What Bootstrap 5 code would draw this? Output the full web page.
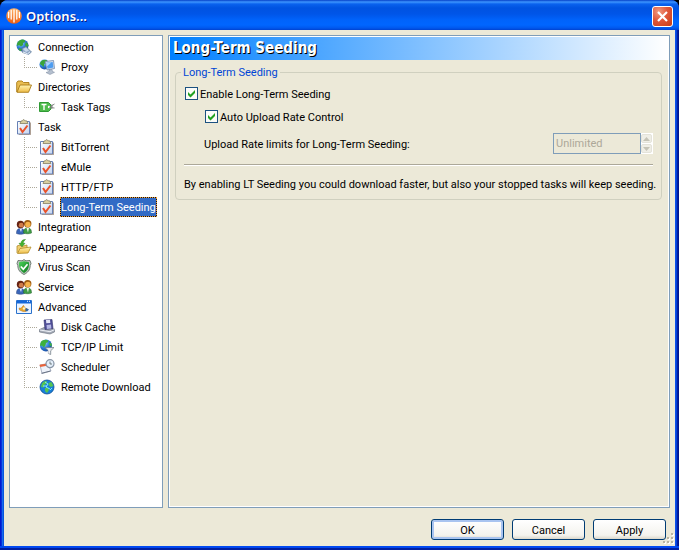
<!DOCTYPE html>
<html lang="en">
<head>
<meta charset="utf-8">
<meta name="viewport" content="width=device-width, initial-scale=1">
<title>Options...</title>
<link rel="stylesheet" href="https://cdn.jsdelivr.net/npm/bootstrap@5.3.0/dist/css/bootstrap.min.css">
<style>
  :root { --face: #ece9d8; --edge: #7f9db9; --dots: #aca899; }
  html, body { background: #000; }
  body { font: 11px/20px Roboto, "Liberation Sans", sans-serif; color: #000; }
  .dialog-window {
    border-radius: 8px 8px 0 0; overflow: hidden;
    background: linear-gradient(90deg, #0019cf 0 1px, #0831d9 1px 2px, #166aee 2px 3px, #0855dd 3px 4px, #0855dd 4px calc(100% - 4px), #0b4fe8 calc(100% - 4px) calc(100% - 3px), #0441d8 calc(100% - 3px) calc(100% - 2px), #001ea0 calc(100% - 2px) calc(100% - 1px), #00138c calc(100% - 1px));
  }
  .title-strip {
    height: 30px; padding: 2px 6px 0;
    background: linear-gradient(#0540c8 0, #3d95ff 2px, #0a62ee 4px, #0053e1 8px, #0055e8 14px, #0063fb 20px, #0066ff 25px, #0058ee 28px, #0042d0 30px);
  }
  .title-text { font: 600 13px/20px "Noto Sans", sans-serif; color: #fff; text-shadow: 1px 1px 0 #0a1883; margin: 0; }
  .close-btn { width: 21px; height: 21px; border: 1px solid #fff; border-radius: 3px; background: radial-gradient(circle at 30% 25%, #f09a80, #e0573a 45%, #c63c14); }
  .face { background: var(--face); margin: 0 4px; padding: 5px 5px 6px; }
  .frame-bottom { height: 4px; background: linear-gradient(#0048f1 0 50%, #001ea0 50%); }
  .pane { border: 1px solid var(--edge); }
  .tree { width: 154px; background: #fff; padding: 1px 0 0 6px; }
  .tree-row { height: 20px; }
  .tree-row a { color: #000; text-decoration: none; line-height: 18px; padding: 2px 1px 0; white-space: nowrap; }
  .tree-row svg { margin-right: 5px; }
  .branch .tree-row { padding-left: 8px; }
  .wire {
    width: 15px; height: 20px; padding: 0;
    background:
      repeating-linear-gradient(var(--dots) 0 1px, transparent 1px 2px) 0 0 / 1px 100% no-repeat,
      repeating-linear-gradient(90deg, var(--dots) 0 1px, transparent 1px 2px) 0 10px / 13px 1px no-repeat;
  }
  .branch li:last-child .wire { background-size: 1px 10px, 13px 1px; }
  .tree-row a.chosen { background: #316ac5; color: #fff; outline: 1px dotted #f0a030; outline-offset: -1px; box-shadow: inset 0 0 0 1px #101020; }
  .page-pane { box-shadow: inset 0 0 0 1px #fff; padding: 1px; margin-left: 5px; min-width: 0; }
  .page-head { font: bold 15px/23px "DejaVu Sans Condensed", sans-serif; color: #fff; text-shadow: 1px 1px 0 #000; background: linear-gradient(90deg, #0080ff, #fff); padding-left: 3px; margin: 0; }
  .group-box { border: 1px solid #d0d0bf; border-radius: 4px; margin: 2px 6px 0 5px; padding: 0 8px 4px; }
  .group-box legend { float: none; width: auto; font-size: 11px; line-height: 18px; color: #0046d5; margin: 0 0 0 -3px; padding: 2px 2px 0; }
  .group-box label { padding-top: 2px; }
  .note { margin: 0 -6px 0 0; }
  .form-check-input.xp-check { width: 13px; height: 13px; margin: 0; border: 1px solid #1c5180; border-radius: 0; background-color: #fbfbf8; }
  .form-check-input.xp-check:checked { background-size: 11px 11px; background-image: url("data:image/svg+xml,%3Csvg xmlns='http://www.w3.org/2000/svg' viewBox='0 0 11 11'%3E%3Cpath d='M2 4v3l2.500 2.500L9 5V2L4.500 6.500z' fill='%2321a121'/%3E%3C/svg%3E"); }
  .opt { height: 23px; gap: 2px; padding-left: 1px; }
  .sub { padding-left: 21px; }
  .rate { height: 31px; padding-left: 20px; }
  .rate-input { width: 88px; height: 21px; border: 1px solid var(--edge); background: var(--face); color: #aca899; padding: 0 2px; font-size: 11px; }
  .spin { width: 12px; height: 21px; background: #fff; padding: 1px 1px 1px 0; gap: 1px; }
  .spin button { border: 1px solid #e4e3da; border-radius: 2px; background: #efeee6; padding: 0; line-height: 0; flex: 1; }
  .rule { height: 2px; background: #aca899; border-bottom: 1px solid #fff; margin: 5px 0 9px; }
  .xp-btn { width: 73px; height: 21px; border: 1px solid #003c74; border-radius: 3px; background: linear-gradient(#fff, #f4f3ee 80%, #dcd8cb); color: #000; font-size: 11px; line-height: 17px; padding: 2px 0 0; }
  .xp-btn.default-btn { box-shadow: inset 0 0 0 2px #a9c4f0; }
  .actions { gap: 8px; padding-top: 11px; padding-right: 4px; }
  .grip { position: absolute; right: 1px; bottom: 2px; }
</style>
<script src="https://cdn.jsdelivr.net/npm/bootstrap@5.3.0/dist/js/bootstrap.bundle.min.js"></script>
</head>
<body>
<svg class="position-absolute" width="0" height="0" aria-hidden="true">
  <defs>
    <radialGradient id="gGlobe" cx=".35" cy=".3" r=".8"><stop offset="0" stop-color="#a8d8ff"/><stop offset=".5" stop-color="#2f7fd6"/><stop offset="1" stop-color="#123f96"/></radialGradient>
    <linearGradient id="gOrange" x2="0" y2="1"><stop offset="0" stop-color="#ffb56b"/><stop offset="1" stop-color="#ee5a0c"/></linearGradient>
    <linearGradient id="gFolder" x2="0" y2="1"><stop offset="0" stop-color="#fff3b0"/><stop offset="1" stop-color="#eebb45"/></linearGradient>
    <linearGradient id="gShield" x2="1" y2="1"><stop offset="0" stop-color="#4fd45c"/><stop offset="1" stop-color="#08751b"/></linearGradient>
    <linearGradient id="gPaper" x2="1" y2="1"><stop offset="0" stop-color="#fff"/><stop offset="1" stop-color="#c4d4f0"/></linearGradient>
  </defs>
  <symbol id="i-connection" viewBox="0 0 16 16">
    <circle cx="6.500" cy="6.500" r="6" fill="url(#gGlobe)"/>
    <path d="M5 .8C8 0 9.500 1 9 3L7 4 7 6 5 7.500 3 6 1 7C.5 4 2 2 5 .8zM10 3l2 2 .5 2-2 1-1.500-2zM3 9l3 1-1 2.300C3 11.500 2 10.500 3 9z" fill="#3aa53a"/>
    <path d="M6 9.500l4-2 3.500 3.500L15.500 13l-3 2.500-6-2z" fill="#8fa8c6" stroke="#5f7897" stroke-width=".6"/>
    <path d="M7 10l3-1.500 3 3-3 1.500z" fill="#c8d8ec"/><path d="M7 13l4.500 1.800 2.500-2" fill="none" stroke="#e6eef8"/>
  </symbol>
  <symbol id="i-proxy" viewBox="0 0 16 16">
    <circle cx="5.500" cy="5.500" r="5" fill="url(#gGlobe)"/><path d="M4 1l4 0-1 3-2 1v3L1 5C1 3 2 2 4 1z" fill="#3aa53a"/>
    <path d="M6 2.500L14.500 1.500 15.500 9.500 8 11z" fill="#d5e2f2" stroke="#6d87ab" stroke-width=".8"/>
    <path d="M7.300 3.700l6.400-.8.700 5.700-5.800 1.100z" fill="#4d9cf0"/><path d="M7.500 3.900l5-.6-4.300 4z" fill="#a9d5ff"/>
    <path d="M10 11l3-.5.500 2 2 .8-4.500 2.200L7 13.500l3-1z" fill="#b5c0cf" stroke="#76859c" stroke-width=".5"/>
  </symbol>
  <symbol id="i-folder" viewBox="0 0 16 16">
    <path d="M.7 13V3.500L2 2h4l1.500 1.500h5.500V6" fill="#e9bd50" stroke="#a97a17" stroke-width=".9"/>
    <path d="M1 13.300L4 6h11.500l-3 7.300z" fill="url(#gFolder)" stroke="#a97a17" stroke-width=".9"/>
  </symbol>
  <symbol id="i-tag" viewBox="0 0 16 16">
    <path d="M.5 3.500h9L12 6v4l-2.500 2.500h-9z" fill="#4fbb4c" stroke="#2f9a34"/>
    <path d="M2.500 5.500h5M5 5.500v5.500" stroke="#fff" stroke-width="1.400"/><circle cx="10" cy="8" r="1.200" fill="#fff"/>
    <path d="M10.500 8L15.500 5M10.500 8.500l5 .5M13 5.500v4" stroke="#777" stroke-width=".9" fill="none"/>
  </symbol>
  <symbol id="i-task" viewBox="0 0 16 16">
    <path d="M1.500 2.500h12v12.500h-12z" fill="url(#gPaper)" stroke="#6780b5"/>
    <path d="M14.500 3.500v12.200H3" stroke="#8a7565" fill="none" stroke-width=".7"/>
    <path d="M4 4.500l1-2.500 1.500-.2 1-1.400 1.500 1.300 2 .3.800 2.500z" fill="#d9cfa0" stroke="#7a7253" stroke-width=".7"/>
    <path d="M4 9l2.500 4L11.500 6.500" stroke="#e8532b" stroke-width="2" fill="none"/>
  </symbol>
  <symbol id="i-people" viewBox="0 0 16 16">
    <path d="M.5 14.500c0-4 1.500-5 4-5s4 1 4 5c-2 1-6 1-8 0z" fill="#3b67b9" stroke="#223f7a" stroke-width=".5"/>
    <path d="M3.500 9.500h2.500L5 13z" fill="#e9efff"/>
    <circle cx="4.500" cy="5.500" r="3.700" fill="#652313"/><circle cx="5.200" cy="6.200" r="2.400" fill="#cf7c4a"/>
    <path d="M7.500 14c0-4 1.500-5 4-5s4 1 4 5c-2 1-6 1-8 0z" fill="#3f9c45" stroke="#24632a" stroke-width=".5"/>
    <path d="M10.500 9h2.500l-1 4.500z" fill="#f2f6e9"/>
    <circle cx="11.700" cy="4.800" r="3.700" fill="#9c5a10"/><circle cx="11.900" cy="5.500" r="2.700" fill="#f5b24a"/>
  </symbol>
  <symbol id="i-appearance" viewBox="0 0 16 16">
    <path d="M1 14V7l3-1 1.500 1.500L11 6v3" fill="#f0ce70" stroke="#b18a28" stroke-width=".8"/>
    <path d="M1.500 14.500L4 9.500l11-1.500-3 6z" fill="url(#gFolder)" stroke="#b18a28" stroke-width=".8"/>
    <path d="M9.500.5C6.500.5 5 2 5 4.300H3l3 3.400 3-3.400H7.200c0-1.500.8-2.500 2.300-3.800z" fill="#45b52f" stroke="#24801c" stroke-width=".5"/>
  </symbol>
  <symbol id="i-shield" viewBox="0 0 16 16">
    <path d="M8 .6l2 1.200 4-.3 1 3-.8 2c0 4.500-2.700 7.300-6.200 9C4.500 13.800 1.800 11 1.800 6.500L1 4.500l1-3 4 .3z" fill="#bcc7bd" stroke="#56645a" stroke-width=".8"/>
    <path d="M8 2.200l5 1c.4 5.500-1.500 8.800-5 10.800-3.500-2-5.400-5.300-5-10.800z" fill="url(#gShield)"/>
    <path d="M4.800 7.500l2.500 2.700 4.200-5" stroke="#fff" stroke-width="1.700" fill="none"/>
  </symbol>
  <symbol id="i-advanced" viewBox="0 0 16 16">
    <path d="M.5 1.500h15v13H.5z" fill="#eaf3ff" stroke="#2a72cc"/><path d="M1 1.500h14v3H1z" fill="#1466d8"/>
    <path d="M11 2.300h1M13 2.300h1" stroke="#fff"/>
    <path d="M3 9l2 .300 2.500-3 1.500 2.700 2.500 1-1.500 2.500H7L3.500 11z" fill="#e9a62d" stroke="#bd7618" stroke-width=".5"/><circle cx="8" cy="9.500" r="1.200" fill="#fff3c0"/><path d="M10 9l3 1.500-2 2-2-1z" fill="#35669f"/>
  </symbol>
  <symbol id="i-disk" viewBox="0 0 16 16">
    <path d="M.5 10.500L5 8.500l10.500 1.500v3L11 15 .5 13z" fill="#a4abb7" stroke="#646b79" stroke-width=".6"/>
    <path d="M1 11l10 1.700 4.500-2" stroke="#eef1f7" fill="none"/>
    <path d="M5 1l8-.5 1 9-8 1z" fill="#504f98" stroke="#30306a" stroke-width=".6"/>
    <path d="M7 1l4-.2.300 3.200-4 .3z" fill="#e4e6f8"/><path d="M7.500 6l4.500-.4.400 3.800-4.500.5z" fill="#b4b6e4"/>
  </symbol>
  <symbol id="i-limit" viewBox="0 0 16 16">
    <circle cx="7" cy="6.500" r="6" fill="url(#gGlobe)"/>
    <path d="M4 1.300C7 0 10 1 9 3L7 4 6.500 6 5 8.500 3 6.500 1.200 7C1 4 2 2.200 4 1.300zM10 3.500l2.500 1 .3 3-2-1z" fill="#3db13d"/>
    <path d="M6 8.500h9l-3.300 3.300v3.700l-2.300-1v-2.700z" fill="#dce1e7" stroke="#6e7884" stroke-width=".7"/>
    <path d="M10 9.500v5" stroke="#fff"/>
  </symbol>
  <symbol id="i-scheduler" viewBox="0 0 16 16">
    <path d="M1 6l8-1.500 3 7.500-9 2.500z" fill="#eef2fa" stroke="#8b95aa" stroke-width=".7"/><path d="M.5 5.800L8.500 4.500l.8 2L1.300 8z" fill="#e8633a"/>
    <path d="M2.500 14.300l9-2.300" stroke="#6c7687"/>
    <circle cx="11" cy="4.700" r="4" fill="#e4effb" stroke="#8794a5" stroke-width="1.200"/><path d="M11 2.500v2.500h2" stroke="#566" fill="none" stroke-width=".8"/>
  </symbol>
  <symbol id="i-remote" viewBox="0 0 16 16">
    <circle cx="8" cy="8" r="7" fill="#1880d8" stroke="#0c4d96" stroke-width=".8"/>
    <path d="M3 4.500C5 2 7 1.500 8 2.500L7 5 5 6l0 2.500L2 8zM9.500 4l3-1 1.800 4-2.500 1-2-1.500zM6 9l3 0 1 2-2 3-2-2z" fill="#56c450"/>
    <path d="M6 3l3 2-2 3 4 2M4 7l4 0M11 11l2-2" stroke="#8ff0ff" stroke-width=".9" fill="none"/>
  </symbol>
</svg>

<div class="dialog-window d-flex flex-column min-vh-100">
  <header class="title-strip d-flex align-items-center">
    <svg width="16" height="16" viewBox="0 0 16 16" class="flex-shrink-0 me-1" aria-hidden="true">
      <circle cx="8" cy="8" r="7.800" fill="url(#gOrange)"/>
      <path d="M2.600 4.500v5M5.200 2.500v8.500M8 2v12M10.800 2.500v8.500M13.400 4.500v5" stroke="#fff" stroke-width="1.300" stroke-linecap="round"/>
    </svg>
    <h1 class="title-text flex-grow-1">Options...</h1>
    <button type="button" class="close-btn d-flex align-items-center justify-content-center p-0" aria-label="Close">
      <svg width="13" height="13" viewBox="0 0 13 13"><path d="M2 2l9 9M11 2l-9 9" stroke="#fff" stroke-width="2.200"/></svg>
    </button>
  </header>

  <main class="face flex-grow-1 d-flex flex-column position-relative">
    <div class="d-flex flex-grow-1">
      <nav class="tree pane flex-shrink-0" aria-label="Option pages">
        <ul class="list-unstyled m-0">
          <li><div class="tree-row d-flex align-items-center"><svg width="16" height="16"><use href="#i-connection"/></svg><a href="#">Connection</a></div>
            <ul class="branch list-unstyled">
              <li class="tree-row d-flex align-items-center"><span class="wire"></span><svg width="16" height="16"><use href="#i-proxy"/></svg><a href="#">Proxy</a></li>
            </ul></li>
          <li><div class="tree-row d-flex align-items-center"><svg width="16" height="16"><use href="#i-folder"/></svg><a href="#">Directories</a></div>
            <ul class="branch list-unstyled">
              <li class="tree-row d-flex align-items-center"><span class="wire"></span><svg width="16" height="16"><use href="#i-tag"/></svg><a href="#">Task Tags</a></li>
            </ul></li>
          <li><div class="tree-row d-flex align-items-center"><svg width="16" height="16"><use href="#i-task"/></svg><a href="#">Task</a></div>
            <ul class="branch list-unstyled">
              <li class="tree-row d-flex align-items-center"><span class="wire"></span><svg width="16" height="16"><use href="#i-task"/></svg><a href="#">BitTorrent</a></li>
              <li class="tree-row d-flex align-items-center"><span class="wire"></span><svg width="16" height="16"><use href="#i-task"/></svg><a href="#">eMule</a></li>
              <li class="tree-row d-flex align-items-center"><span class="wire"></span><svg width="16" height="16"><use href="#i-task"/></svg><a href="#">HTTP/FTP</a></li>
              <li class="tree-row d-flex align-items-center"><span class="wire"></span><svg width="16" height="16"><use href="#i-task"/></svg><a href="#" class="chosen" aria-current="page">Long-Term Seeding</a></li>
            </ul></li>
          <li><div class="tree-row d-flex align-items-center"><svg width="16" height="16"><use href="#i-people"/></svg><a href="#">Integration</a></div></li>
          <li><div class="tree-row d-flex align-items-center"><svg width="16" height="16"><use href="#i-appearance"/></svg><a href="#">Appearance</a></div></li>
          <li><div class="tree-row d-flex align-items-center"><svg width="16" height="16"><use href="#i-shield"/></svg><a href="#">Virus Scan</a></div></li>
          <li><div class="tree-row d-flex align-items-center"><svg width="16" height="16"><use href="#i-people"/></svg><a href="#">Service</a></div></li>
          <li><div class="tree-row d-flex align-items-center"><svg width="16" height="16"><use href="#i-advanced"/></svg><a href="#">Advanced</a></div>
            <ul class="branch list-unstyled">
              <li class="tree-row d-flex align-items-center"><span class="wire"></span><svg width="16" height="16"><use href="#i-disk"/></svg><a href="#">Disk Cache</a></li>
              <li class="tree-row d-flex align-items-center"><span class="wire"></span><svg width="16" height="16"><use href="#i-limit"/></svg><a href="#">TCP/IP Limit</a></li>
              <li class="tree-row d-flex align-items-center"><span class="wire"></span><svg width="16" height="16"><use href="#i-scheduler"/></svg><a href="#">Scheduler</a></li>
              <li class="tree-row d-flex align-items-center"><span class="wire"></span><svg width="16" height="16"><use href="#i-remote"/></svg><a href="#">Remote Download</a></li>
            </ul></li>
        </ul>
      </nav>

      <section class="page-pane pane flex-grow-1">
        <h2 class="page-head">Long-Term Seeding</h2>
        <fieldset class="group-box">
          <legend>Long-Term Seeding</legend>
          <div class="opt d-flex align-items-center">
            <input class="form-check-input xp-check" type="checkbox" id="enableLts" checked>
            <label for="enableLts">Enable Long-Term Seeding</label>
          </div>
          <div class="opt sub d-flex align-items-center">
            <input class="form-check-input xp-check" type="checkbox" id="autoRate" checked>
            <label for="autoRate">Auto Upload Rate Control</label>
          </div>
          <div class="rate d-flex align-items-center">
            <label for="rateLimit" class="flex-grow-1">Upload Rate limits for Long-Term Seeding:</label>
            <input class="rate-input" type="text" id="rateLimit" value="Unlimited" disabled>
            <div class="spin d-flex flex-column">
              <button type="button" disabled aria-label="Increase"><svg width="7" height="4" viewBox="0 0 7 4"><path d="M0 4l3.500-4L7 4z" fill="#c5c3b6"/></svg></button>
              <button type="button" disabled aria-label="Decrease"><svg width="7" height="4" viewBox="0 0 7 4"><path d="M0 0l3.500 4L7 0z" fill="#c5c3b6"/></svg></button>
            </div>
          </div>
          <div class="rule"></div>
          <p class="note">By enabling LT Seeding you could download faster, but also your stopped tasks will keep seeding.</p>
        </fieldset>
      </section>
    </div>

    <div class="actions d-flex justify-content-end">
      <button type="button" class="xp-btn default-btn">OK</button>
      <button type="button" class="xp-btn">Cancel</button>
      <button type="button" class="xp-btn">Apply</button>
    </div>
    <svg class="grip" width="11" height="11" viewBox="0 0 11 11" aria-hidden="true">
      <path d="M9 1h2v2H9zM5 5h2v2H5zM9 5h2v2H9zM1 9h2v2H1zM5 9h2v2H5zM9 9h2v2H9z" fill="#fff"/>
      <path d="M8 0h2v2H8zM4 4h2v2H4zM8 4h2v2H8zM0 8h2v2H0zM4 8h2v2H4zM8 8h2v2H8z" fill="#b8b4a3"/>
    </svg>
  </main>
  <div class="frame-bottom"></div>
</div>
</body>
</html>
